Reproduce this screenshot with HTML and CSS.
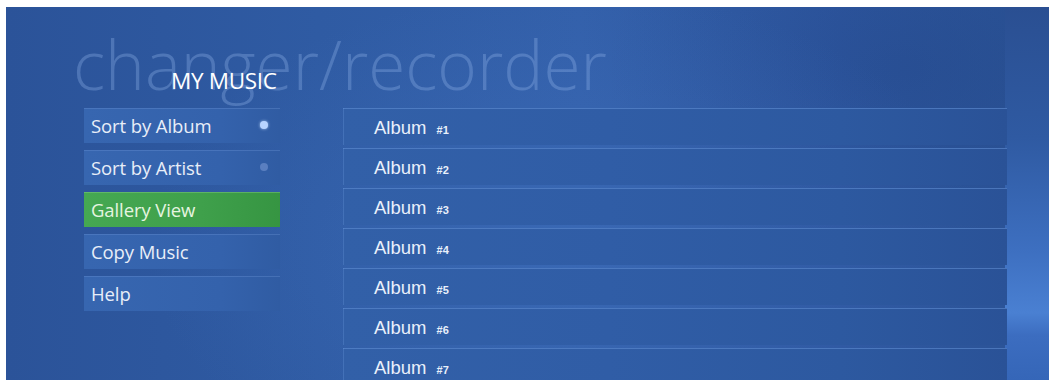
FILE: index.html
```html
<!DOCTYPE html>
<html>
<head>
<meta charset="utf-8">
<link rel="stylesheet" href="styles.css">
</head>
<body>
<div class="screen">
  <div class="watermark">changer/recorder</div>
  <div class="sidebar-edge"></div>
  <div class="heading">MY MUSIC</div>
  <div class="content">
    <div class="menu">
      <div class="item">Sort by Album<span class="dot on"></span></div>
      <div class="item">Sort by Artist<span class="dot off"></span></div>
      <div class="item active">Gallery View</div>
      <div class="item">Copy Music</div>
      <div class="item">Help</div>
    </div>
    <div class="list">
      <div class="row">Album <b>#1</b></div>
      <div class="row">Album <b>#2</b></div>
      <div class="row">Album <b>#3</b></div>
      <div class="row">Album <b>#4</b></div>
      <div class="row">Album <b>#5</b></div>
      <div class="row">Album <b>#6</b></div>
      <div class="row">Album <b>#7</b></div>
    </div>
  </div>
</div>
</body>
</html>
```
FILE: styles.css
```css
html, body { margin: 0; padding: 0; background: #ffffff; }
body { width: 1054px; height: 385px; overflow: hidden; }
.screen {
  position: relative;
  margin: 7px 0 0 6px;
  width: 1043px;
  height: 373px;
  overflow: hidden;
  background:
    radial-gradient(ellipse 420px 260px at 560px 240px, rgba(70,120,200,0.35), rgba(70,120,200,0) 100%),
    radial-gradient(ellipse 300px 200px at 900px 60px, rgba(20,50,110,0.2), rgba(20,50,110,0) 100%),
    linear-gradient(90deg, #2b5399 0%, #2f5ba3 30%, #3360aa 55%, #2e57a0 80%, #2b5396 100%);
  font-family: "Open Sans", "DejaVu Sans", sans-serif;
  color: #ffffff;
}
.sidebar-edge {
  position: absolute;
  right: 0; top: 0;
  width: 44px; height: 373px;
  background: linear-gradient(180deg, #2a4f92 0%, #2f5aa2 35%, #3d6fc0 65%, #4a80d2 82%, #3c6dc0 88%, #3566b8 100%);
}
.watermark {
  position: absolute;
  left: 67px;
  top: 11px;
  font-size: 67.5px;
  font-weight: 300;
  color: rgba(150,185,235,0.32);
  white-space: nowrap;
}
.heading {
  position: relative;
  padding: 61px 0 0 165px;
  height: 25px;
  font-size: 22.5px;
  line-height: 25px;
  letter-spacing: -0.3px;
  color: #ffffff;
}
.content {
  position: relative;
  display: flex;
  margin-top: 15px;
  padding-left: 78px;
}
.menu {
  display: flex;
  flex-direction: column;
  gap: 7px;
  width: 196px;
}
.item {
  position: relative;
  height: 35px;
  padding-left: 7px;
  font-size: 18.5px;
  line-height: 35px;
  letter-spacing: -0.1px;
  color: #e8eef8;
  background: linear-gradient(90deg, #3766b0 0%, #3462ac 70%, #305ca3 100%);
  box-shadow: inset 0 1px 0 rgba(110,150,215,0.35);
}
.item.active {
  background: linear-gradient(90deg, #45a852 0%, #3fa04b 60%, #369542 100%);
  color: #e6f5e0;
  box-shadow: inset 0 1px 0 rgba(140,210,140,0.4);
}
.dot {
  position: absolute;
  right: 12px;
  top: 13px;
  width: 8px; height: 8px;
  border-radius: 50%;
}
.dot.on { background: #b8d4ff; box-shadow: 0 0 3px rgba(200,225,255,0.8); }
.dot.off { background: #5a7fc0; }
.list {
  display: flex;
  flex-direction: column;
  gap: 3px;
  margin-left: 63px;
  width: 664px;
}
.row {
  height: 37px;
  padding-left: 31px;
  font-family: "Liberation Sans", Arial, sans-serif;
  font-size: 18.5px;
  line-height: 39px;
  color: #e9f0fb;
  background: linear-gradient(90deg, #3260a8 0%, #305da6 40%, #2d59a0 75%, #2a5297 100%);
  box-shadow: inset 0 1px 0 rgba(100,145,215,0.55), inset 1px 0 0 rgba(100,145,215,0.35);
  flex-shrink: 0;
}
.row b {
  font-size: 11px;
  font-weight: bold;
  margin-left: 5px;
}
```
